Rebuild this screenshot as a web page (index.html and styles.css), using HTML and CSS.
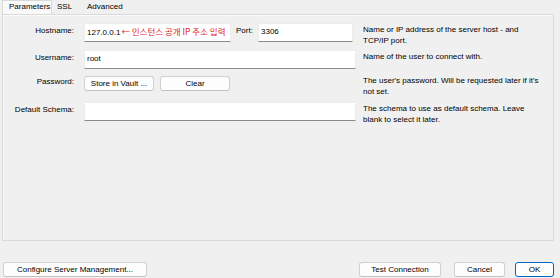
FILE: index.html
```html
<!DOCTYPE html>
<html lang="en">
<head>
    <meta charset="UTF-8" />
    <title>Connection Parameters</title>
    <link rel="stylesheet" href="styles.css">
</head>
<body>

    <div class="dialog">
        <div class="tabs">
            <div class="tab active">Parameters</div>
            <div class="tab">SSL</div>
            <div class="tab">Advanced</div>
        </div>

        <div class="panel">
            <div class="form">
                <div class="label">Hostname:</div>
                <div class="field host-row">
                    <div class="input host">127.0.0.1<span class="note">← 인스턴스 공개 IP 주소 입력</span></div>
                    <div class="label port-label">Port:</div>
                    <div class="input port">3306</div>
                </div>
                <div class="desc">Name or IP address of the server host - and TCP/IP port.</div>

                <div class="label">Username:</div>
                <div class="field">
                    <div class="input">root</div>
                </div>
                <div class="desc">Name of the user to connect with.</div>

                <div class="label">Password:</div>
                <div class="field buttons">
                    <button class="btn small">Store in Vault ...</button>
                    <button class="btn small">Clear</button>
                </div>
                <div class="desc">The user's password. Will be requested later if it's not set.</div>

                <div class="label">Default Schema:</div>
                <div class="field">
                    <div class="input"></div>
                </div>
                <div class="desc">The schema to use as default schema. Leave blank to select it later.</div>
            </div>
        </div>

        <div class="footer">
            <button class="btn configure">Configure Server Management...</button>
            <div class="spacer"></div>
            <button class="btn test">Test Connection</button>
            <button class="btn cancel">Cancel</button>
            <button class="btn ok">OK</button>
        </div>
    </div>

</body>
</html>
```

FILE: styles.css
```css
body {
    margin: 0;
    background-color: #f0f0f0;
    color: #000;
    font-family: 'Liberation Sans', Arial, sans-serif;
    font-size: 8px;
}

.dialog {
    width: 560px;
    height: 278px;
    box-sizing: border-box;
    padding: 0 6px 1px 2px;
    display: flex;
    flex-direction: column;
}

.tabs {
    display: flex;
    height: 14px;
}

.tab {
    height: 14px;
    line-height: 14px;
    padding: 0 5px;
    box-sizing: border-box;
    color: #000;
}

.tab.active {
    width: 50px;
    padding: 0 0 0 6px;
    background-color: #f9f9f9;
    border: 1px solid #d9d9d9;
    border-bottom: none;
    line-height: 12px;
}

.tab:nth-child(2) {
    width: 28px;
    padding-left: 5px;
}

.tab:nth-child(3) {
    padding-left: 7px;
}

.panel {
    height: 227px;
    box-sizing: border-box;
    border: 1px solid #dadada;
    box-shadow: inset 1px 1px 0 #fbfbfb;
    padding: 8px 0 0 7px;
}

.form {
    display: grid;
    grid-template-columns: 64px 272px 180px;
    grid-template-rows: 27px 24px 28px auto;
    column-gap: 10px;
}

.form > .desc {
    margin-left: -3px;
}

.label {
    text-align: right;
    line-height: 11px;
    padding-top: 2px;
}

.desc {
    line-height: 11px;
    padding-top: 1px;
    width: 176px;
}

.host-row {
    display: flex;
}

.input {
    height: 19px;
    box-sizing: border-box;
    background-color: #fff;
    border: 1px solid #ececec;
    border-bottom-color: #8a8a8a;
    padding: 0 2px;
    line-height: 15px;
    white-space: nowrap;
    overflow: hidden;
}

.input.host {
    width: 147px;
}

.note {
    color: #e3211b;
    font-family: 'Noto Sans CJK KR', 'Liberation Sans', sans-serif;
    font-size: 8.5px;
    margin-left: 1px;
}

.port-label {
    width: 25px;
    text-align: left;
    padding-left: 5px;
    box-sizing: border-box;
}

.input.port {
    width: 95px;
    margin-left: 2px;
}

.buttons {
    display: flex;
    gap: 6px;
    padding-top: 2px;
}

.btn {
    height: 15px;
    box-sizing: border-box;
    background-color: #fdfdfd;
    border: 1px solid #d0d0d0;
    border-bottom-color: #c2c2c2;
    border-radius: 3px;
    font-family: 'Liberation Sans', Arial, sans-serif;
    font-size: 8px;
    color: #000;
    padding: 0;
}

.btn.small {
    width: 70px;
}

.footer {
    display: flex;
    margin-top: 21px;
    padding-left: 1px;
}

.spacer {
    flex: 1;
}

.btn.configure {
    width: 144px;
}

.btn.test {
    width: 82px;
}

.btn.cancel {
    width: 51px;
    margin-left: 13px;
}

.btn.ok {
    width: 39px;
    margin-left: 10px;
    border-color: #0067c0;
}
```
